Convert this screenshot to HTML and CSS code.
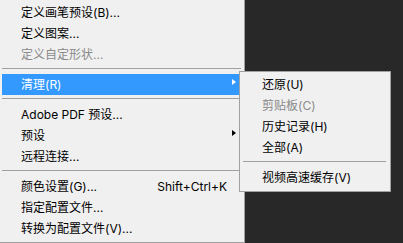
FILE: index.html
```html
<!DOCTYPE html>
<html>
<head>
<meta charset="utf-8">
<link rel="stylesheet" href="styles.css">
</head>
<body>
<div class="stage">
  <div class="menu main">
    <div class="item">定义画笔预设(B)...</div>
    <div class="item">定义图案...</div>
    <div class="item disabled">定义自定形状...</div>
    <div class="sep"></div>
    <div class="item active">清理(R)<span class="arrow white"></span></div>
    <div class="sep"></div>
    <div class="item">Adobe PDF 预设...</div>
    <div class="item">预设<span class="arrow"></span></div>
    <div class="item">远程连接...</div>
    <div class="sep"></div>
    <div class="item">颜色设置(G)...<span class="shortcut">Shift+Ctrl+K</span></div>
    <div class="item">指定配置文件...</div>
    <div class="item">转换为配置文件(V)...</div>
  </div>
  <div class="menu sub">
    <div class="item">还原(U)</div>
    <div class="item disabled">剪贴板(C)</div>
    <div class="item">历史记录(H)</div>
    <div class="item">全部(A)</div>
    <div class="sep"></div>
    <div class="item">视频高速缓存(V)</div>
  </div>
</div>
</body>
</html>
```

FILE: styles.css
```css
html, body {
  margin: 0;
  padding: 0;
  background: #282828;
}
.stage {
  position: relative;
  width: 403px;
  height: 243px;
  overflow: hidden;
  font-family: "Inter", "Noto Sans CJK SC", sans-serif;
  font-size: 12px;
  color: #000;
}
.menu {
  background: #f0f0f0;
  box-sizing: border-box;
}
.main {
  width: 245px;
  height: 243px;
  padding: 2px 3px 3px 2px;
  border-right: 1px solid #a0a0a0;
  border-bottom: 1px solid #a0a0a0;
}
.item {
  position: relative;
  height: 21px;
  line-height: 21px;
  padding-left: 19px;
  white-space: nowrap;
}
.disabled {
  color: #8a8a8a;
}
.active {
  background: #3399ff;
  color: #fff;
}
.sep {
  height: 9px;
  box-sizing: border-box;
  padding-top: 3px;
}
.sep::before {
  content: "";
  display: block;
  height: 1px;
  background: #a0a0a0;
}
.arrow {
  position: absolute;
  left: 230px;
  top: 5px;
  width: 0;
  height: 0;
  border-top: 3.5px solid transparent;
  border-bottom: 3.5px solid transparent;
  border-left: 4px solid #000;
}
.arrow.white {
  border-left-color: #fff;
}
.shortcut {
  position: absolute;
  right: 14px;
  top: 0;
}
.sub {
  position: absolute;
  left: 239px;
  top: 71px;
  width: 152px;
  height: 121px;
  border: 1px solid #a0a0a0;
  padding: 2px 4px 3px 3px;
}
```
